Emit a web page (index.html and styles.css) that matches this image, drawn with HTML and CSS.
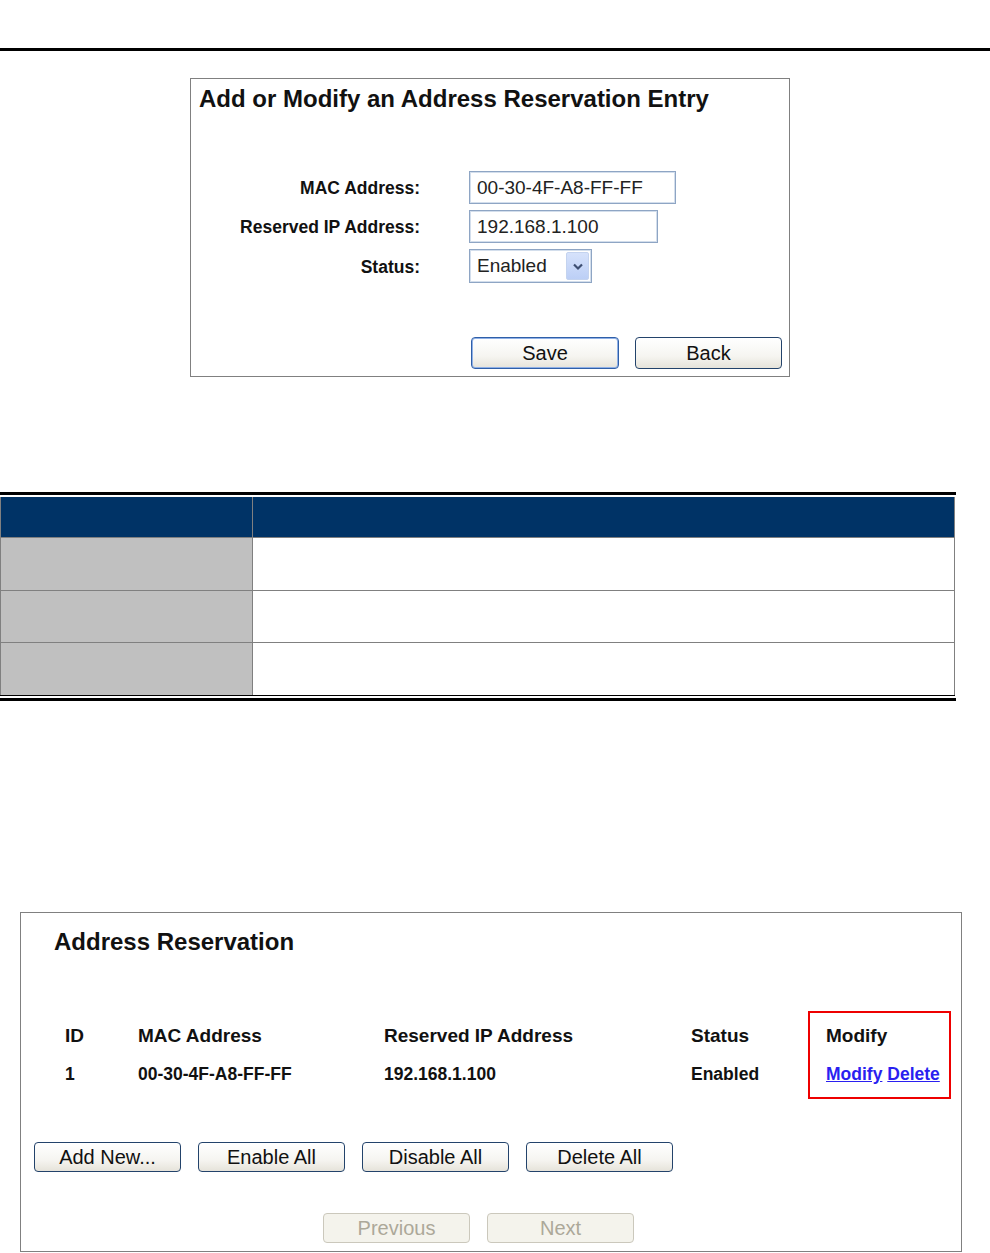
FILE: index.html
```html
<!DOCTYPE html>
<html lang="en">
<head>
<meta charset="utf-8">
<title>Address Reservation</title>
<link rel="stylesheet" href="styles.css">
</head>
<body>
<div class="top-rule"></div>

<section class="entry-box">
  <h2 class="box-title">Add or Modify an Address Reservation Entry</h2>
  <div class="entry-form">
    <label class="field-label">MAC Address:</label>
    <input class="text-field mac" type="text" value="00-30-4F-A8-FF-FF">
    <label class="field-label">Reserved IP Address:</label>
    <input class="text-field ip" type="text" value="192.168.1.100">
    <label class="field-label">Status:</label>
    <div class="fake-select">
      <span class="select-value">Enabled</span>
      <span class="select-arrow"><svg width="12" height="9" viewBox="0 0 12 9"><path d="M2 2.5 L6 6.5 L10 2.5" fill="none" stroke="#3e4f72" stroke-width="2.2"/></svg></span>
    </div>
  </div>
  <div class="entry-actions">
    <button class="btn btn-focus" type="button">Save</button>
    <button class="btn" type="button">Back</button>
  </div>
</section>

<div class="def-wrap">
  <table class="def-table">
    <thead>
      <tr><th class="col-key"></th><th class="col-val"></th></tr>
    </thead>
    <tbody>
      <tr class="tall"><td class="col-key"></td><td class="col-val"></td></tr>
      <tr><td class="col-key"></td><td class="col-val"></td></tr>
      <tr class="tall"><td class="col-key"></td><td class="col-val"></td></tr>
    </tbody>
  </table>
</div>

<section class="list-box">
  <h2 class="box-title list-title">Address Reservation</h2>
  <div class="entries">
    <div class="ecol c-id"><div class="ehead">ID</div><div class="edata">1</div></div>
    <div class="ecol c-mac"><div class="ehead">MAC Address</div><div class="edata">00-30-4F-A8-FF-FF</div></div>
    <div class="ecol c-ip"><div class="ehead">Reserved IP Address</div><div class="edata">192.168.1.100</div></div>
    <div class="ecol c-status"><div class="ehead">Status</div><div class="edata">Enabled</div></div>
    <div class="ecol c-modify"><div class="ehead">Modify</div><div class="edata"><a href="#">Modify</a> <a href="#">Delete</a></div></div>
  </div>
  <div class="list-actions">
    <button class="btn btn-sm" type="button">Add New...</button>
    <button class="btn btn-sm" type="button">Enable All</button>
    <button class="btn btn-sm" type="button">Disable All</button>
    <button class="btn btn-sm" type="button">Delete All</button>
  </div>
  <div class="list-nav">
    <button class="btn btn-sm btn-disabled" type="button" disabled>Previous</button>
    <button class="btn btn-sm btn-disabled" type="button" disabled>Next</button>
  </div>
</section>
</body>
</html>
```
FILE: styles.css
```css
html, body {
  margin: 0;
  padding: 0;
  background: #fff;
}
body {
  font-family: "Liberation Sans", Arial, sans-serif;
  color: #000;
  width: 990px;
}

.top-rule {
  height: 3px;
  background: #000;
  margin-top: 48px;
}

/* ---------- Entry form box ---------- */
.entry-box {
  box-sizing: border-box;
  margin: 27px 0 0 190px;
  width: 600px;
  height: 299px;
  border: 1px solid #808080;
}
.box-title {
  margin: 0;
  padding: 6px 0 0 8px;
  font-size: 24px;
  line-height: 28px;
  font-weight: bold;
  color: #111;
}
.entry-form {
  margin-top: 58px;
  display: grid;
  grid-template-columns: 229px auto;
  column-gap: 49px;
  row-gap: 6px;
  align-items: center;
}
.field-label {
  text-align: right;
  font-size: 17.5px;
  font-weight: bold;
  color: #111;
  padding-top: 2px;
}
.text-field {
  box-sizing: border-box;
  height: 33px;
  margin: 0;
  padding: 0 0 0 7px;
  border: 1px solid #8ea5c4;
  box-shadow: inset 0 0 0 1px #d3deec;
  font-family: "Liberation Sans", Arial, sans-serif;
  font-size: 19px;
  color: #222;
  background: #fff;
  justify-self: start;
  outline: none;
}
.text-field.mac { width: 207px; }
.text-field.ip { width: 189px; }

.fake-select {
  box-sizing: border-box;
  justify-self: start;
  width: 123px;
  height: 34px;
  border: 1px solid #8ea5c4;
  box-shadow: inset 0 0 0 1px #d3deec;
  display: flex;
  align-items: center;
  justify-content: space-between;
  padding: 2px 2px 2px 7px;
}
.select-value {
  font-size: 19px;
  color: #222;
}
.select-arrow {
  box-sizing: border-box;
  width: 23px;
  height: 28px;
  background: linear-gradient(#d6e2fb, #bccff6);
  border: 1px solid #c4d3ef;
  border-radius: 2px;
  display: flex;
  align-items: center;
  justify-content: center;
}

.entry-actions {
  margin-top: 54px;
  padding-left: 280px;
  display: flex;
  gap: 16px;
}

/* ---------- Buttons ---------- */
.btn {
  box-sizing: border-box;
  width: 147px;
  height: 32px;
  margin: 0;
  padding: 0;
  border: 1px solid #23436b;
  border-radius: 4px;
  background: linear-gradient(#ffffff, #f6f5f1 60%, #e6e3da);
  font-family: "Liberation Sans", Arial, sans-serif;
  font-size: 20px;
  color: #111;
  line-height: 1;
}
.btn-focus {
  width: 148px;
  border-color: #2f5fa8;
  box-shadow: inset 0 0 0 1px #8fb0e6;
}
.btn-sm {
  height: 30px;
}
.btn-disabled {
  border-color: #cbc8bc;
  background: #f4f3ec;
  color: #aca899;
}

/* ---------- Definition table ---------- */
.def-wrap {
  margin-top: 115px;
  width: 956px;
  border-top: 3px solid #000;
  border-bottom: 3px solid #000;
  padding: 2px 0;
}
.def-table {
  width: 955px;
  border-collapse: collapse;
}
.def-table th,
.def-table td {
  padding: 0;
  border: 1px solid #808080;
}
.def-table th {
  border-top: none;
  background: #003366;
  height: 40px;
}
.def-table tbody tr { height: 52px; }
.def-table tbody tr.tall { height: 53px; }
.def-table tbody tr:last-child td { border-bottom-color: #000; }
.def-table .col-key { width: 251px; }
.def-table td.col-key { background: #c0c0c0; }
.def-table td.col-val { background: #fff; }

/* ---------- Address Reservation list ---------- */
.list-box {
  box-sizing: border-box;
  margin: 211px 0 0 20px;
  width: 942px;
  height: 340px;
  border: 1px solid #808080;
}
.list-title {
  padding: 15px 0 0 33px;
}
.entries {
  margin-top: 55px;
  padding-left: 42px;
  display: flex;
}
.ecol {
  box-sizing: border-box;
  border: 2px solid transparent;
  padding: 11px 0 11px 0;
}
.c-id { width: 73px; }
.c-mac { width: 246px; }
.c-ip { width: 307px; }
.c-status { width: 119px; }
.c-modify {
  width: 143px;
  border-color: #ee0000;
  padding-left: 16px;
}
.ehead {
  font-size: 19px;
  line-height: 24px;
  font-weight: bold;
  color: #111;
}
.edata {
  margin-top: 14px;
  font-size: 17.5px;
  line-height: 24px;
  font-weight: bold;
  color: #111;
  white-space: nowrap;
}
.edata a {
  color: #2a1ff0;
  text-decoration: underline;
}
.list-actions {
  margin-top: 43px;
  padding-left: 13px;
  display: flex;
  gap: 17px;
}
.list-nav {
  margin-top: 41px;
  padding-left: 302px;
  display: flex;
  gap: 17px;
}
```
